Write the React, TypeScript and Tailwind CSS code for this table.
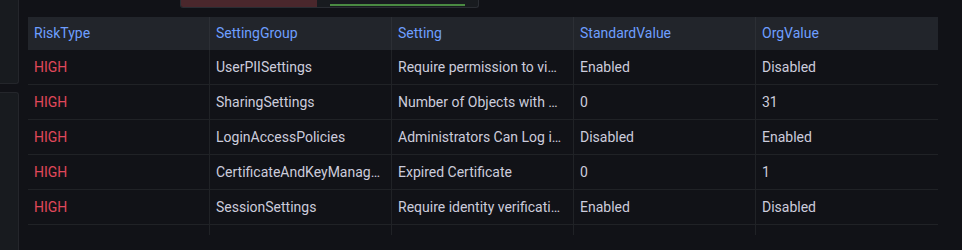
import React from 'react';

type Row = {
  risk: string;
  group: string;
  setting: string;
  standard: string;
  org: string;
};

// texts as the table shows them, cut to the column width
const rows: Row[] = [
  { risk: 'HIGH', group: 'UserPIISettings', setting: 'Require permission to vi…', standard: 'Enabled', org: 'Disabled' },
  { risk: 'HIGH', group: 'SharingSettings', setting: 'Number of Objects with …', standard: '0', org: '31' },
  { risk: 'HIGH', group: 'LoginAccessPolicies', setting: 'Administrators Can Log i…', standard: 'Disabled', org: 'Enabled' },
  { risk: 'HIGH', group: 'CertificateAndKeyManag…', setting: 'Expired Certificate', standard: '0', org: '1' },
  { risk: 'HIGH', group: 'SessionSettings', setting: 'Require identity verificati…', standard: 'Enabled', org: 'Disabled' },
];

const columns = ['RiskType', 'SettingGroup', 'Setting', 'StandardValue', 'OrgValue'];

function Cell({ children, red, last }: { children: React.ReactNode; red?: boolean; last?: boolean }) {
  return (
    <div
      className={`min-w-0 truncate px-[6px] leading-[34px] ${red ? 'text-[#e0485b]' : ''} ${last ? '' : 'border-r border-[#202226]'}`}
    >
      {children}
    </div>
  );
}

export default function App() {
  return (
    <div
      className="flex h-[250px] w-[962px] overflow-hidden bg-[#111217] text-[14px]"
      style={{ fontFamily: 'Roboto, "Liberation Sans", sans-serif' }}
    >
      {/* left side panels */}
      <div className="flex w-[19px] shrink-0 flex-col gap-[8px]">
        <div className="h-[84px] rounded-br-[3px] border-r border-b border-[#24262b] bg-[#181b1f]" />
        <div className="flex-1 rounded-tr-[3px] border-t border-r border-[#24262b] bg-[#181b1f]" />
      </div>

      <div className="flex flex-1 flex-col pl-[9px]">
        {/* top stat panel edge */}
        <div className="ml-[152px] flex h-[8px] w-[299px] overflow-hidden rounded-b-[3px] border-x border-b border-[#2a2d33] bg-[#181b1f]">
          <div className="w-[136px] bg-[#4a272c]" />
          <div className="flex flex-1 flex-col justify-end px-[13px] pb-[1px]">
            <div className="h-[2px] bg-[#4a8a42]" />
          </div>
        </div>

        {/* table */}
        <div className="mt-[9px] w-[910px]">
          <div className="grid h-[33px] grid-cols-5 bg-[#22252b]">
            {columns.map((c, i) => (
              <div
                key={c}
                className={`truncate px-[6px] leading-[33px] text-[#6e9fff] ${i < 4 ? 'border-r border-[#2c2f35]' : ''}`}
              >
                {c}
              </div>
            ))}
          </div>

          {rows.map((r, idx) => (
            <div key={idx} className="grid h-[35px] grid-cols-5 border-b border-[#202226] text-[#ccccdc]">
              <Cell red>{r.risk}</Cell>
              <Cell>{r.group}</Cell>
              <Cell>{r.setting}</Cell>
              <Cell>{r.standard}</Cell>
              <Cell last>{r.org}</Cell>
            </div>
          ))}

          <div className="grid h-[10px] grid-cols-5">
            <div className="border-r border-[#202226]" />
            <div className="border-r border-[#202226]" />
            <div className="border-r border-[#202226]" />
            <div className="border-r border-[#202226]" />
            <div />
          </div>
        </div>
      </div>
    </div>
  );
}
